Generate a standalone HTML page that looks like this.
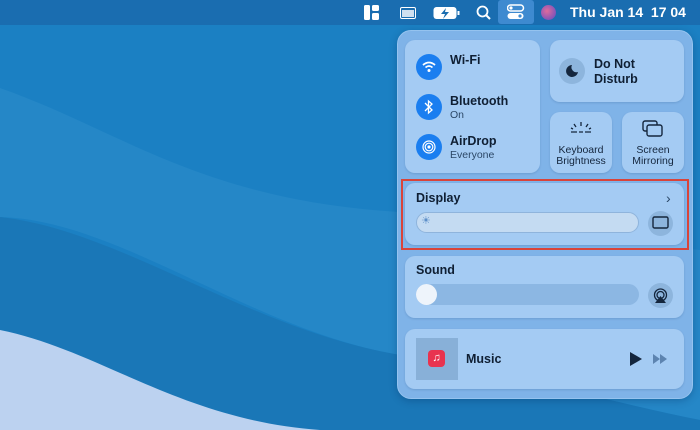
<!DOCTYPE html>
<html><head><meta charset="utf-8"><style>
*{margin:0;padding:0;box-sizing:border-box}
body{width:700px;height:430px;overflow:hidden;position:relative;font-family:"Liberation Sans",sans-serif;background:#1b80c3}
#bg{position:absolute;left:0;top:0}
.mb{position:absolute;left:0;top:0;width:700px;height:25px;background:#1a6db0}
.mbt{position:absolute;top:4px;color:#fff;font-size:14px;font-weight:bold}
.panel{position:absolute;left:397px;top:30px;width:296px;height:369px;background:#7fb3e8;border-radius:14px;border:1px solid #95c3ef;box-shadow:0 2px 8px rgba(0,40,90,.3)}
.tile{position:absolute;background:#a4cbf3;border-radius:10px;box-shadow:0 1px 2px rgba(0,40,90,.15)}
.t{position:absolute;font-size:12.5px;font-weight:bold;color:#0f1f33}
.s{position:absolute;font-size:10.5px;color:#2b4766}
.c{position:absolute;width:26px;height:26px;border-radius:50%;background:#1a7ef0}
.sm{position:absolute;font-size:10.5px;color:#14263d;text-align:center;line-height:11px;width:62px}
</style></head><body>
<svg id="bg" width="700" height="430">
<path d="M0 88 C120 130 200 200 400 212 C500 220 600 240 700 250 L700 420 C600 400 500 370 400 355 C250 330 120 220 0 217Z" fill="#2587c7"/>
<path d="M0 217 C120 230 250 330 400 355 C500 370 600 400 700 420 L700 430 L0 430Z" fill="#1a77b7"/>
<path d="M0 330 C100 350 180 420 320 430 L0 430Z" fill="#bcd2f0"/>
</svg>
<div class="mb"></div>
<svg style="position:absolute;left:364px;top:5px" width="16" height="16"><rect x="0" y="0" width="6" height="15" rx="1.5" fill="#fff"/><rect x="8" y="0" width="7" height="6" rx="1.5" fill="#fff"/><rect x="8" y="8" width="7" height="7" rx="1.5" fill="#fff"/></svg>
<svg style="position:absolute;left:400px;top:7px" width="16" height="12"><rect x="0.5" y="0.5" width="15" height="11" rx="1.5" fill="none" stroke="#fff"/><rect x="2" y="3" width="12" height="7" fill="#cfe0f0"/></svg>
<svg style="position:absolute;left:433px;top:6px" width="28" height="14"><rect x="0.5" y="1" width="23" height="12" rx="3" fill="#fff"/><rect x="24.5" y="5" width="2" height="4" fill="#fff"/><path d="M13 2 L8 8 L12 8 L10 13 L16 6 L12 6Z" fill="#1a6db0"/></svg>
<svg style="position:absolute;left:476px;top:5px" width="16" height="16"><circle cx="6.5" cy="6.5" r="5" fill="none" stroke="#fff" stroke-width="1.8"/><path d="M10 10 L14 14" stroke="#fff" stroke-width="2"/></svg>
<div style="position:absolute;left:498px;top:0;width:36px;height:24px;background:#3e8ad0;border-radius:3px"></div>
<svg style="position:absolute;left:507px;top:4px" width="18" height="17"><rect x="0.5" y="1" width="16" height="6" rx="3" fill="none" stroke="#fff" stroke-width="1.5"/><circle cx="4" cy="4" r="1.6" fill="#fff"/><rect x="0.5" y="9" width="16" height="6" rx="3" fill="#fff"/><circle cx="13" cy="12" r="1.6" fill="#3e8ad0"/></svg>
<div style="position:absolute;left:541px;top:5px;width:15px;height:15px;border-radius:50%;background:radial-gradient(circle at 40% 40%,#e06b9c,#5b4bc4)"></div>
<div class="mbt" style="left:570px">Thu Jan 14 &nbsp;17 04</div>

<div class="panel"></div>
<div class="tile" style="left:405px;top:40px;width:135px;height:133px"></div>
<div class="c" style="left:416px;top:54px"></div>
<svg style="position:absolute;left:421px;top:59px" width="16" height="16"><path d="M2 6 Q8 1 14 6" fill="none" stroke="#fff" stroke-width="1.8"/><path d="M4.5 8.5 Q8 5.5 11.5 8.5" fill="none" stroke="#fff" stroke-width="1.8"/><circle cx="8" cy="11.5" r="1.5" fill="#fff"/></svg>
<div class="t" style="left:450px;top:53px">Wi-Fi</div>
<div class="c" style="left:416px;top:94px"></div>
<svg style="position:absolute;left:423px;top:99px" width="12" height="16"><path d="M2 4 L9 11 L5.5 14 L5.5 2 L9 5 L2 12" fill="none" stroke="#fff" stroke-width="1.3"/></svg>
<div class="t" style="left:450px;top:94px">Bluetooth</div>
<div class="s" style="left:450px;top:109px">On</div>
<div class="c" style="left:416px;top:134px"></div>
<svg style="position:absolute;left:420px;top:138px" width="18" height="18"><circle cx="9" cy="9" r="6" fill="none" stroke="#fff" stroke-width="1.2"/><circle cx="9" cy="9" r="3.8" fill="none" stroke="#fff" stroke-width="1.2"/><circle cx="9" cy="9" r="1.6" fill="#fff"/></svg>
<div class="t" style="left:450px;top:134px">AirDrop</div>
<div class="s" style="left:450px;top:149px">Everyone</div>

<div class="tile" style="left:550px;top:40px;width:134px;height:62px"></div>
<div style="position:absolute;left:559px;top:58px;width:26px;height:26px;border-radius:50%;background:#8db5dd"></div>
<svg style="position:absolute;left:565px;top:64px" width="14" height="14"><path d="M7 1 A6 6 0 1 0 13 8 A5 5 0 0 1 7 1Z" fill="#14263d"/></svg>
<div class="t" style="left:594px;top:57px;line-height:15px">Do Not<br>Disturb</div>

<div class="tile" style="left:550px;top:112px;width:62px;height:61px"></div>
<svg style="position:absolute;left:569px;top:120px" width="24" height="14"><path d="M2 12 H8 M10 12 H14 M16 12 H22" stroke="#14263d" stroke-width="1.3"/><path d="M12 2 V6 M5 4 L7 7 M19 4 L17 7 M2 8 L4 9 M22 8 L20 9" stroke="#14263d" stroke-width="1.3"/></svg>
<div class="sm" style="left:550px;top:145px">Keyboard<br>Brightness</div>
<div class="tile" style="left:622px;top:112px;width:62px;height:61px"></div>
<svg style="position:absolute;left:642px;top:120px" width="22" height="18"><rect x="1" y="1" width="14" height="10" rx="2" fill="none" stroke="#14263d" stroke-width="1.4"/><rect x="5" y="5" width="15" height="11" rx="2" fill="#a4cbf3" stroke="#14263d" stroke-width="1.4"/></svg>
<div class="sm" style="left:622px;top:145px">Screen<br>Mirroring</div>

<div style="position:absolute;left:401px;top:179px;width:288px;height:71px;border:2px solid #d9443a"></div>
<div class="tile" style="left:405px;top:183px;width:279px;height:62px"></div>
<div class="t" style="left:416px;top:191px">Display</div>
<div style="position:absolute;left:666px;top:190px;font-size:14px;color:#2b4766">›</div>
<div style="position:absolute;left:416px;top:212px;width:223px;height:21px;border-radius:11px;background:#c4dbf2;border:1px solid #8fb4dc"></div>
<div style="position:absolute;left:421px;top:214px;font-size:11px;color:#5d8fc8">☀</div>
<div style="position:absolute;left:648px;top:211px;width:25px;height:25px;border-radius:50%;background:#8db5dd"></div>
<svg style="position:absolute;left:652px;top:216px" width="17" height="14"><rect x="1" y="1" width="15" height="11" rx="1.5" fill="none" stroke="#14263d" stroke-width="1.4"/></svg>

<div class="tile" style="left:405px;top:256px;width:279px;height:62px"></div>
<div class="t" style="left:416px;top:263px">Sound</div>
<div style="position:absolute;left:416px;top:284px;width:223px;height:21px;border-radius:11px;background:#8cb7e3"></div>
<div style="position:absolute;left:416px;top:284px;width:21px;height:21px;border-radius:50%;background:#eef4fb"></div>
<div style="position:absolute;left:648px;top:283px;width:25px;height:25px;border-radius:50%;background:#8db5dd"></div>
<svg style="position:absolute;left:652px;top:287px" width="17" height="17"><circle cx="8.5" cy="8" r="6" fill="none" stroke="#14263d" stroke-width="1.3"/><circle cx="8.5" cy="8" r="3.5" fill="none" stroke="#14263d" stroke-width="1.3"/><path d="M8.5 9 L3 16 H14Z" fill="#14263d"/></svg>

<div class="tile" style="left:405px;top:329px;width:279px;height:60px"></div>
<div style="position:absolute;left:416px;top:338px;width:42px;height:42px;background:#88b0d8"></div>
<div style="position:absolute;left:428px;top:350px;width:17px;height:17px;border-radius:4px;background:#e8334f;color:#fff;font-size:11px;text-align:center;line-height:17px">♫</div>
<div class="t" style="left:466px;top:352px">Music</div>
<svg style="position:absolute;left:629px;top:351px" width="44" height="16"><path d="M1 1 L13 8 L1 15Z" fill="#14263d"/><path d="M24 3 L31 8 L24 13Z M31 3 L38 8 L31 13Z" fill="#5d84b0"/></svg>
</body></html>
